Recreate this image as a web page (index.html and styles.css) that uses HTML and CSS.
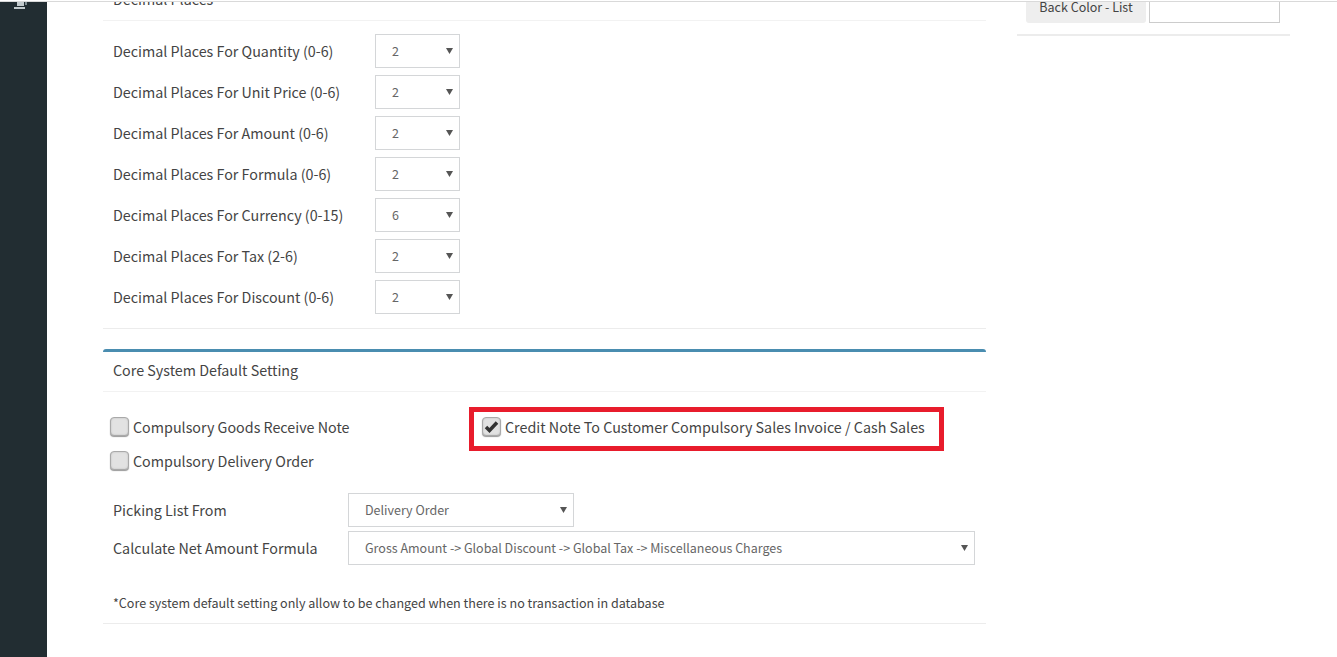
FILE: index.html
```html
<!DOCTYPE html>
<html lang="en">
<head>
    <meta charset="UTF-8">
    <title>Company Setting</title>
    <link rel="stylesheet" href="styles.css">
</head>
<body>
    <div class="top-line"></div>
    <div class="layout">
        <!-- Sidebar -->
        <div class="sidebar">
            <svg class="side-icon" width="14" height="12" viewBox="0 0 14 12">
                <path d="M3 0h7v8H3z" fill="#c3cbce"/>
                <path d="M0 9h11v2H0z" fill="#c3cbce"/>
                <path d="M11 2h2v5h-2z" fill="#7d8b90"/>
            </svg>
        </div>

        <div class="content">
            <div class="main-col">
                <!-- Decimal places -->
                <div class="panel panel-first">
                    <div class="panel-title">Decimal Places</div>
                    <div class="decimal-list">
                        <div class="decimal-row">
                            <label>Decimal Places For Quantity (0-6)</label>
                            <select class="select-small"><option>2</option></select>
                        </div>
                        <div class="decimal-row">
                            <label>Decimal Places For Unit Price (0-6)</label>
                            <select class="select-small"><option>2</option></select>
                        </div>
                        <div class="decimal-row">
                            <label>Decimal Places For Amount (0-6)</label>
                            <select class="select-small"><option>2</option></select>
                        </div>
                        <div class="decimal-row">
                            <label>Decimal Places For Formula (0-6)</label>
                            <select class="select-small"><option>2</option></select>
                        </div>
                        <div class="decimal-row">
                            <label>Decimal Places For Currency (0-15)</label>
                            <select class="select-small"><option>6</option></select>
                        </div>
                        <div class="decimal-row">
                            <label>Decimal Places For Tax (2-6)</label>
                            <select class="select-small"><option>2</option></select>
                        </div>
                        <div class="decimal-row">
                            <label>Decimal Places For Discount (0-6)</label>
                            <select class="select-small"><option>2</option></select>
                        </div>
                    </div>
                </div>

                <!-- Core system default -->
                <div class="panel panel-core">
                    <div class="panel-title">Core System Default Setting</div>
                    <div class="core-body">
                        <div class="check-grid">
                            <div class="check-col">
                                <label class="check"><input type="checkbox">Compulsory Goods Receive Note</label>
                                <label class="check"><input type="checkbox">Compulsory Delivery Order</label>
                            </div>
                            <div class="highlight">
                                <label class="check"><input type="checkbox" checked>Credit Note To Customer Compulsory Sales Invoice / Cash Sales</label>
                            </div>
                        </div>
                        <div class="core-row">
                            <label>Picking List From</label>
                            <select class="select-picking"><option>Delivery Order</option></select>
                        </div>
                        <div class="core-row">
                            <label>Calculate Net Amount Formula</label>
                            <select class="select-formula"><option>Gross Amount -&gt; Global Discount -&gt; Global Tax -&gt; Miscellaneous Charges</option></select>
                        </div>
                        <p class="note">*Core system default setting only allow to be changed when there is no transaction in database</p>
                    </div>
                </div>
            </div>

            <!-- Right column -->
            <div class="side-col">
                <div class="color-panel">
                    <span class="color-label">Back Color - List</span>
                    <input class="color-input" type="text">
                </div>
            </div>
        </div>
    </div>
</body>
</html>
```

FILE: styles.css
```css
/* Styles for the page */
html, body {
    height: 100%;
}

body {
    font-family: "Noto Sans CJK SC", "Noto Sans", sans-serif;
    font-size: 14.3px;
    background: #fff;
    color: #444;
    margin: 0;
    overflow: hidden;
}

.top-line {
    height: 1px;
    border-bottom: 1px solid #d9d9d9;
}

.layout {
    display: flex;
    height: 655px;
    overflow: hidden;
}

.sidebar {
    width: 47px;
    flex-shrink: 0;
    background: #222d32;
}

.side-icon {
    display: block;
    margin: -4px 0 0 14px;
}

.content {
    display: flex;
    align-items: flex-start;
    margin-top: -23px;
    padding-left: 56px;
}

.main-col {
    width: 883px;
}

.panel {
    border-top: 3px solid transparent;
    border-bottom: 1px solid #ececec;
    border-radius: 3px 3px 0 0;
}

.panel-core {
    margin-top: 20px;
    border-top-color: #4a8db0;
}

.panel-title {
    height: 38px;
    line-height: 33px;
    padding-left: 10px;
    border-bottom: 1px solid #f2f2f2;
}

.panel-core .panel-title {
    height: 39px;
    line-height: 35px;
}

.decimal-list {
    display: flex;
    flex-direction: column;
    gap: 7px;
    padding: 13px 10px 14px;
}

.decimal-row {
    display: flex;
    align-items: center;
    height: 34px;
}

.decimal-row label {
    width: 262px;
    padding-bottom: 2px;
}

select {
    appearance: none;
    height: 34px;
    background: #fff url("data:image/svg+xml,%3Csvg xmlns='http://www.w3.org/2000/svg' width='7' height='7'%3E%3Cpath d='M0 1h7L3.500 7z' fill='%23555'/%3E%3C/svg%3E") no-repeat right 6px top 12px;
    border: 1px solid #d4d6d8;
    border-radius: 0;
    font-family: inherit;
    font-size: 12.5px;
    color: #666;
    padding: 0 16px 2px;
    outline: none;
}

.select-small {
    width: 85px;
}

.select-picking {
    width: 226px;
}

.select-formula {
    width: 627px;
}

.core-body {
    padding: 15px 11px 0 7px;
}

.check-grid {
    display: flex;
    align-items: flex-start;
}

.check-col {
    display: flex;
    flex-direction: column;
    gap: 10px;
    width: 359px;
    padding-top: 7px;
}

.check {
    display: flex;
    align-items: center;
    gap: 4px;
    height: 24px;
    white-space: nowrap;
}

.check input {
    appearance: none;
    width: 19px;
    height: 19px;
    margin: 0;
    background: #e2e2e2 center no-repeat;
    border: 1px solid #a9a9a9;
    border-radius: 4px;
    box-shadow: 0 1px 1px #999, inset 0 0 2px #bbb;
}

.check input:checked {
    background-image: url("data:image/svg+xml,%3Csvg xmlns='http://www.w3.org/2000/svg' width='15' height='13' viewBox='0 0 15 13'%3E%3Cpath d='M2 7l3.500 3.500L13 2.500' fill='none' stroke='%23333' stroke-width='3.500'/%3E%3C/svg%3E");
}

.highlight {
    display: flex;
    align-items: center;
    box-sizing: border-box;
    width: 475px;
    height: 44px;
    padding: 0 0 5px 8px;
    border: 5px solid #e81c2c;
}

.core-row {
    display: flex;
    align-items: center;
    padding-left: 3px;
    margin-top: 4px;
}

.check-grid + .core-row {
    margin-top: 21px;
}

.core-row label {
    width: 235px;
    padding-bottom: 2px;
}

.note {
    font-size: 12.55px;
    margin: 29px 0 0 3px;
    padding-bottom: 11px;
    line-height: 18px;
    color: #444;
}

.side-col {
    width: 273px;
    margin-left: 31px;
}

.color-panel {
    display: flex;
    align-items: stretch;
    height: 44px;
    padding: 0 10px 11px 9px;
    border-bottom: 2px solid #ececec;
    box-sizing: content-box;
}

.color-label {
    display: flex;
    align-items: flex-end;
    justify-content: center;
    box-sizing: border-box;
    width: 120px;
    padding-bottom: 7px;
    background: #eee;
    border-radius: 3px;
    font-size: 12.5px;
}

.color-input {
    box-sizing: border-box;
    width: 131px;
    height: 100%;
    margin: 0 0 0 3px;
    border: 1px solid #ccc;
    outline: none;
}
```
